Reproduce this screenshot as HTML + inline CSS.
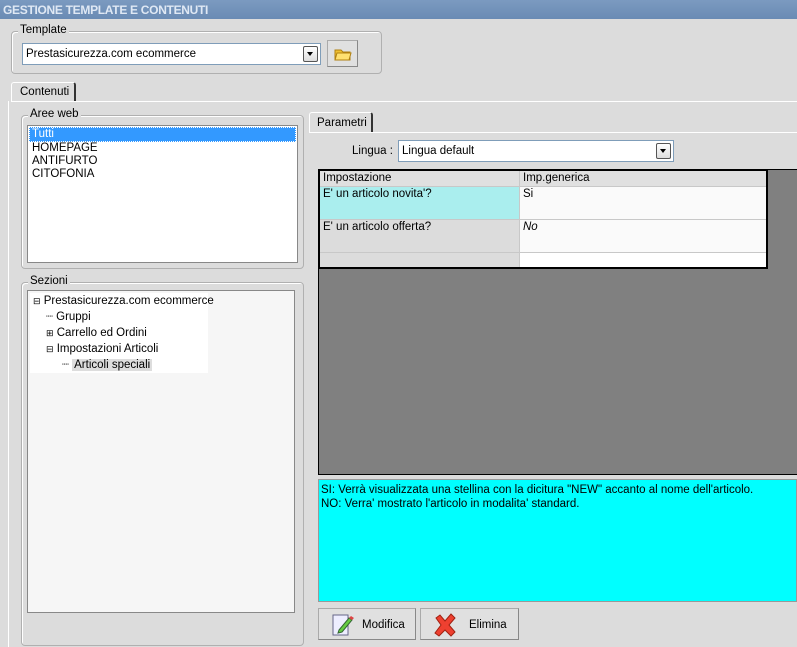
<!DOCTYPE html>
<html><head><style>
body{margin:0;width:797px;height:647px;background:#dcdcdc;font-family:"Liberation Sans",sans-serif;font-size:11.5px;color:#000;position:relative;overflow:hidden}
.a{position:absolute;box-sizing:border-box}
.grp{border:1px solid #b0b0b0;border-radius:4px;box-shadow:1px 1px 0 #fff inset}
.lg{position:absolute;top:-8px;left:6px;background:#dcdcdc;padding:0 2px}
.combo{background:#fff;border:1px solid #7f9db9;padding:4px 3px 0}
.dd{position:absolute;right:2px;top:2px;width:13px;height:14px;border:1px solid #555;border-radius:2px;background:linear-gradient(#fff,#ddd)}
.dd:after{content:"";position:absolute;left:3px;top:5px;border:3px solid transparent;border-top:4px solid #000}
.btn{background:#e0e0e0;border:1px solid #aaa;border-right-color:#888;border-bottom-color:#888}
td{padding:1px 3px;vertical-align:top;border:1px solid #c8c8c8}
</style></head><body>
<div class="a" style="left:0;top:0;width:797px;height:19px;background:linear-gradient(#7b9ac0,#6a8bb4);color:#dfe8f4;font-weight:bold;font-size:12px;padding:3px 3px;font-family:'Liberation Sans',sans-serif;letter-spacing:-0.3px">GESTIONE TEMPLATE E CONTENUTI</div>
<div class="a grp" style="left:11px;top:31px;width:371px;height:43px"><span class="lg">Template</span></div>
<div class="a combo" style="left:22px;top:43px;width:299px;height:22px">Prestasicurezza.com ecommerce<div class="dd"></div></div>
<div class="a btn" style="left:327px;top:40px;width:31px;height:27px"><svg width="18" height="16" style="position:absolute;left:6px;top:5px"><path d="M1 4h6l2 2h7v8H1z" fill="#f0c030" stroke="#b08010"/><path d="M3 7h14l-2 7H1z" fill="#ffe070" stroke="#b08010"/></svg></div>
<div class="a" style="left:11px;top:82px;width:65px;height:20px;border:1px solid #fff;border-right:2px solid #333;border-bottom:none;padding:3px 8px;border-radius:3px 3px 0 0">Contenuti</div>
<div class="a" style="left:11px;top:101px;width:786px;height:1px;background:#fff"></div>
<div class="a" style="left:8px;top:101px;width:1px;height:546px;background:#fff"></div>
<div class="a grp" style="left:21px;top:115px;width:283px;height:154px"><span class="lg">Aree web</span></div>
<div class="a" style="left:27px;top:125px;width:271px;height:138px;background:#fff;border:1px solid #888;padding:1px;line-height:13px">
<div style="background:#3399ff;color:#fff;padding:0 2px;border:1px dotted #fff;height:13px">Tutti</div>
<div style="padding:0 3px">HOMEPAGE</div><div style="padding:0 3px">ANTIFURTO</div><div style="padding:0 3px">CITOFONIA</div></div>
<div class="a grp" style="left:21px;top:282px;width:283px;height:364px"><span class="lg">Sezioni</span></div>
<div class="a" style="left:27px;top:290px;width:268px;height:323px;background:#f6f6f6;border:1px solid #888;line-height:16px">
<div style="position:absolute;left:2px;top:2px;width:178px;height:80px;background:#fff"></div>
<div class="a" style="left:5px;top:2px;white-space:nowrap"><span style="font-size:9px">⊟</span> Prestasicurezza.com ecommerce</div>
<div class="a" style="left:18px;top:18px">┈ Gruppi</div>
<div class="a" style="left:18px;top:34px"><span style="font-size:9px">⊞</span> Carrello ed Ordini</div>
<div class="a" style="left:18px;top:50px"><span style="font-size:9px">⊟</span> Impostazioni Articoli</div>
<div class="a" style="left:34px;top:66px">┈ <span style="background:#ddd;padding:0 2px">Articoli speciali</span></div>
</div>
<div class="a" style="left:309px;top:112px;width:64px;height:21px;border:1px solid #fff;border-right:2px solid #333;border-bottom:none;padding:4px 7px;border-radius:3px 3px 0 0">Parametri</div>
<div class="a" style="left:309px;top:132px;width:488px;height:1px;background:#fff"></div>
<div class="a" style="left:352px;top:145px">Lingua :</div>
<div class="a combo" style="left:398px;top:140px;width:276px;height:22px">Lingua default<div class="dd"></div></div>
<div class="a" style="left:318px;top:169px;width:479px;height:306px;background:#808080;border-top:1px solid #000;border-left:1px solid #000;border-bottom:1px solid #000"></div>
<table class="a" style="left:318px;top:169px;width:450px;border-collapse:collapse;border:2px solid #000;background:#fff">
<tr style="height:16px;background:#e0e0e0"><td style="width:193px">Impostazione</td><td>Imp.generica</td></tr>
<tr style="height:33px"><td style="background:#aaeeee">E' un articolo novita'?</td><td style="background:#fafafa">Si</td></tr>
<tr style="height:33px"><td style="background:#dcdcdc">E' un articolo offerta?</td><td style="background:#fafafa"><i>No</i></td></tr>
<tr style="height:16px"><td style="background:#dcdcdc"></td><td></td></tr>
</table>
<div class="a" style="left:318px;top:479px;width:479px;height:123px;background:#00ffff;border:1px solid #999;padding:3px 2px;line-height:14px">SI: Verrà visualizzata una stellina con la dicitura "NEW" accanto al nome dell'articolo.<br>NO: Verra' mostrato l'articolo in modalita' standard.</div>
<div class="a btn" style="left:318px;top:608px;width:98px;height:32px"><svg width="22" height="24" style="position:absolute;left:13px;top:4px"><rect x="1" y="2" width="15" height="20" fill="#eef" stroke="#668"/><path d="M7 17l10-12 3 2-10 12-4 1z" fill="#6c4" stroke="#363"/><path d="M17 5l2-2 3 2-2 2z" fill="#d44"/></svg><span class="a" style="left:43px;top:10px">Modifica</span></div>
<div class="a btn" style="left:420px;top:608px;width:99px;height:32px"><svg width="24" height="24" style="position:absolute;left:12px;top:4px"><path d="M3 5l4-3 5 6 6-7 4 4-6 7 6 7-4 4-6-6-6 6-4-3 6-8z" fill="#ee4030" stroke="#a02010"/></svg><span class="a" style="left:48px;top:10px">Elimina</span></div>
</body></html>
